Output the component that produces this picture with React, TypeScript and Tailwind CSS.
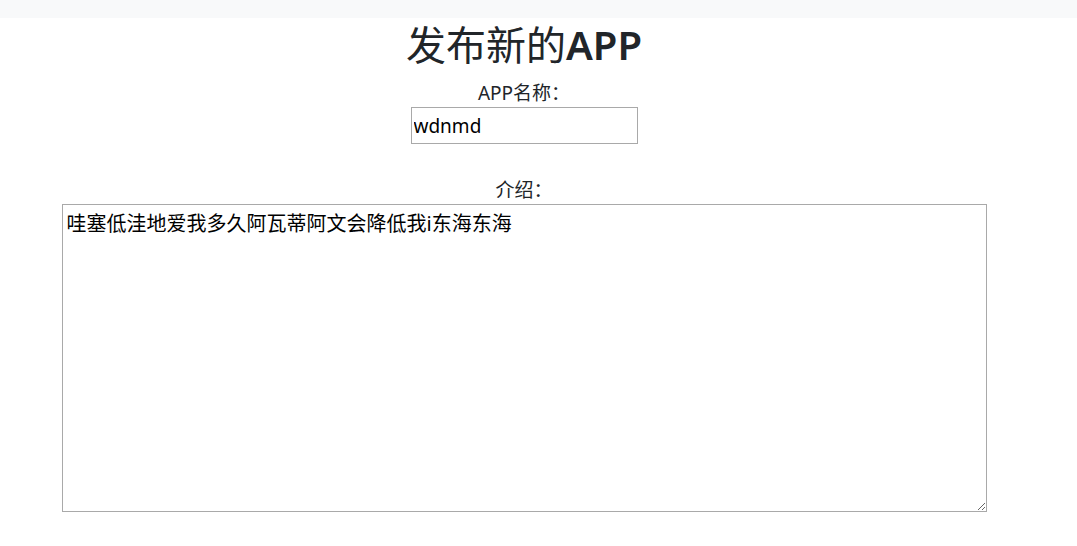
import React from 'react';

export default function App() {
    return (
        <div className="min-h-screen bg-white text-[#212529]" style={{ fontFamily: '"Noto Sans", "Noto Sans CJK SC", sans-serif' }}>
            {/* top bar */}
            <div className="h-[18px] w-full bg-[#f8f9fa]"></div>

            <div className="w-[1048px] flex flex-col items-center">
                <h1 className="mt-[3px] text-[40px] leading-[48px] font-normal">
                    发布新的<span className="font-semibold">APP</span>
                </h1>

                <label className="mt-[12px] text-[19px] leading-[24px]">APP名称：</label>
                <input
                    type="text"
                    defaultValue="wdnmd"
                    className="mt-[2px] w-[227px] h-[37px] border border-[#a9a9a9] px-[2px] text-[19px] text-black outline-none"
                />

                <label className="mt-[34px] text-[19px] leading-[24px]">介绍：</label>
                <textarea
                    defaultValue="哇塞低洼地爱我多久阿瓦蒂阿文会降低我i东海东海"
                    className="mt-[2px] w-[925px] h-[308px] border border-[#a9a9a9] p-[4px] text-[20px] leading-[30px] text-black outline-none"
                />
            </div>
        </div>
    );
}
